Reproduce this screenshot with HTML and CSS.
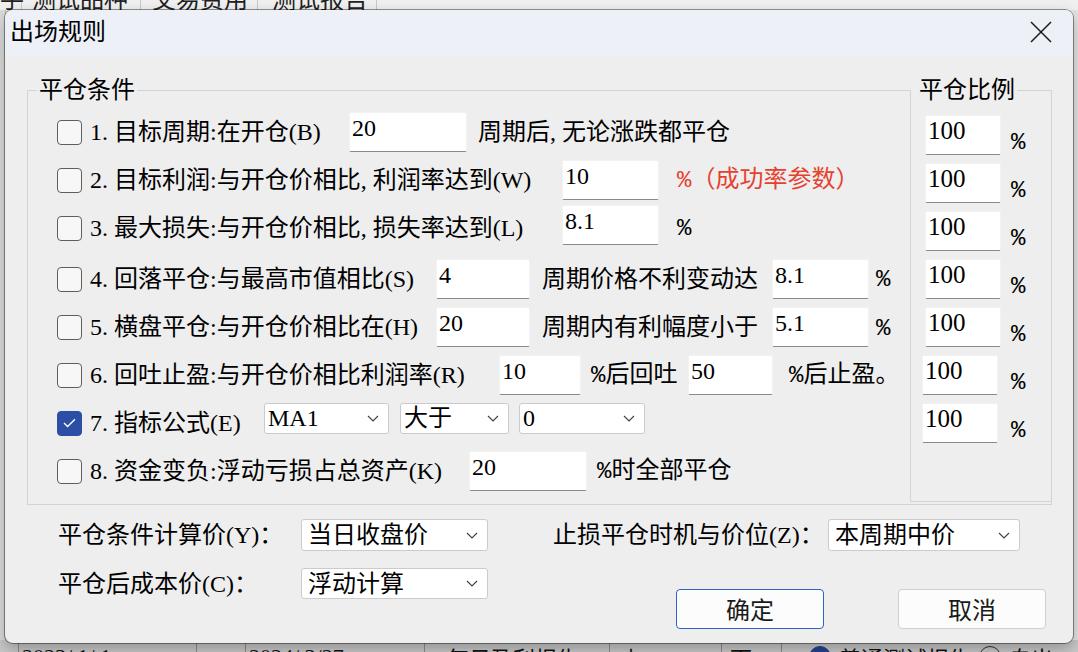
FILE: index.html
```html
<!DOCTYPE html>
<html lang="zh-CN">
<head>
<meta charset="utf-8">
<title>出场规则</title>
<link rel="stylesheet" href="styles.css">
</head>
<body>
<div class="app">
  <div class="app-tabs">
    <span class="app-tab app-tab--stub">手</span>
    <span class="app-tab app-tab--a">测试品种</span>
    <span class="app-tab app-tab--b">交易费用</span>
    <span class="app-tab app-tab--c">测试报告</span>
  </div>
  <div class="app-main">
    <div class="app-side"></div>
  </div>
  <div class="app-status">
    <span class="st st--a"></span>
    <span class="st st--b">2023/ 1/ 1</span>
    <span class="st st--c">→</span>
    <span class="st st--d">2024/ 3/27</span>
    <span class="st st--e">每日盈利报告</span>
    <span class="st st--f">山</span>
    <span class="st st--g">下</span>
    <span class="st st--h"><span class="radio radio--on"></span>普通测试报告<span class="radio"></span>自出</span>
  </div>

  <div class="dialog">
    <div class="titlebar">
      <span class="title">出场规则</span>
      <button class="close" type="button" aria-label="关闭">
        <svg width="22" height="22" viewBox="0 0 22 22"><path d="M1 1L21 21M21 1L1 21" stroke="#1b1b1b" stroke-width="1.5" fill="none"/></svg>
      </button>
    </div>

    <div class="dialog-body">
      <div class="groups">
        <fieldset class="group group--conditions">
          <legend>平仓条件</legend>

          <div class="row">
            <span class="box"></span>
            <span class="label label--b">1. 目标周期:在开仓(B)</span>
            <input class="num w118" type="text" value="20">
            <span class="text ml11">周期后, 无论涨跌都平仓</span>
          </div>

          <div class="row">
            <span class="box"></span>
            <span class="label label--w">2. 目标利润:与开仓价相比, 利润率达到(W)</span>
            <input class="num w97" type="text" value="10">
            <span class="text red ml18"><span class="pct">%</span>（成功率参数）</span>
          </div>

          <div class="row row--gap">
            <span class="box"></span>
            <span class="label label--l">3. 最大损失:与开仓价相比, 损失率达到(L)</span>
            <input class="num w97 num--up" type="text" value="8.1">
            <span class="text ml18"><span class="pct">%</span></span>
          </div>

          <div class="row">
            <span class="box"></span>
            <span class="label label--s">4. 回落平仓:与最高市值相比(S)</span>
            <input class="num w94" type="text" value="4">
            <span class="text mid">周期价格不利变动达</span>
            <input class="num w97" type="text" value="8.1">
            <span class="text ml7"><span class="pct">%</span></span>
          </div>

          <div class="row">
            <span class="box"></span>
            <span class="label label--s">5. 横盘平仓:与开仓价相比在(H)</span>
            <input class="num w94" type="text" value="20">
            <span class="text mid">周期内有利幅度小于</span>
            <input class="num w97" type="text" value="5.1">
            <span class="text ml7 low"><span class="pct">%</span></span>
          </div>

          <div class="row">
            <span class="box"></span>
            <span class="label label--r">6. 回吐止盈:与开仓价相比利润率(R)</span>
            <input class="num w82" type="text" value="10">
            <span class="text mid2"><span class="pct">%</span>后回吐</span>
            <input class="num w85" type="text" value="50">
            <span class="text ml16"><span class="pct">%</span>后止盈。</span>
          </div>

          <div class="row">
            <span class="box box--on">
              <svg width="13" height="10" viewBox="0 0 13 10"><path d="M1 5L4.6 8.5L12 1.2" stroke="#fff" stroke-width="1.4" fill="none"/></svg>
            </span>
            <span class="label label--e">7. 指标公式(E)</span>
            <div class="select select--row w125">MA1<svg width="12" height="7" viewBox="0 0 12 7"><path d="M1 1L6 6L11 1" stroke="#444" stroke-width="1.2" fill="none"/></svg></div>
            <div class="select select--row w109 ml11">大于<svg width="12" height="7" viewBox="0 0 12 7"><path d="M1 1L6 6L11 1" stroke="#444" stroke-width="1.2" fill="none"/></svg></div>
            <div class="select select--row w126 ml10">0<svg width="12" height="7" viewBox="0 0 12 7"><path d="M1 1L6 6L11 1" stroke="#444" stroke-width="1.2" fill="none"/></svg></div>
          </div>

          <div class="row">
            <span class="box"></span>
            <span class="label label--k">8. 资金变负:浮动亏损占总资产(K)</span>
            <input class="num w118" type="text" value="20">
            <span class="text ml10"><span class="pct">%</span>时全部平仓</span>
          </div>
        </fieldset>

        <fieldset class="group group--ratio">
          <legend>平仓比例</legend>
          <div class="ratio-row"><input class="num ratio" type="text" value="100"><span class="pct ratio-pct">%</span></div>
          <div class="ratio-row"><input class="num ratio" type="text" value="100"><span class="pct ratio-pct">%</span></div>
          <div class="ratio-row"><input class="num ratio" type="text" value="100"><span class="pct ratio-pct">%</span></div>
          <div class="ratio-row"><input class="num ratio" type="text" value="100"><span class="pct ratio-pct">%</span></div>
          <div class="ratio-row"><input class="num ratio" type="text" value="100"><span class="pct ratio-pct">%</span></div>
          <div class="ratio-row ratio-row--shift"><input class="num ratio" type="text" value="100"><span class="pct ratio-pct">%</span></div>
          <div class="ratio-row ratio-row--shift"><input class="num ratio" type="text" value="100"><span class="pct ratio-pct">%</span></div>
        </fieldset>
      </div>

      <div class="footer">
        <div class="footer-col">
          <div class="field">
            <span class="field-label w243">平仓条件计算价(Y)：</span>
            <div class="select w187">当日收盘价<svg width="12" height="7" viewBox="0 0 12 7"><path d="M1 1L6 6L11 1" stroke="#444" stroke-width="1.2" fill="none"/></svg></div>
          </div>
          <div class="field field--next">
            <span class="field-label w243">平仓后成本价(C)：</span>
            <div class="select select--short w187">浮动计算<svg width="12" height="7" viewBox="0 0 12 7"><path d="M1 1L6 6L11 1" stroke="#444" stroke-width="1.2" fill="none"/></svg></div>
          </div>
        </div>
        <div class="footer-col footer-col--right">
          <div class="field">
            <span class="field-label w275">止损平仓时机与价位(Z)：</span>
            <div class="select w192">本周期中价<svg width="12" height="7" viewBox="0 0 12 7"><path d="M1 1L6 6L11 1" stroke="#444" stroke-width="1.2" fill="none"/></svg></div>
          </div>
          <div class="buttons">
            <button class="btn btn--primary" type="button">确定</button>
            <button class="btn" type="button">取消</button>
          </div>
        </div>
      </div>
    </div>
  </div>
</div>
</body>
</html>
```

FILE: styles.css
```css
* { box-sizing: border-box; }

html, body { margin: 0; padding: 0; }

body {
  width: 1078px;
  height: 652px;
  overflow: hidden;
  font-family: "Liberation Serif", "Noto Sans CJK SC", serif;
  font-size: 24px;
  line-height: 24px;
  color: #000;
  background: #f0f0f0;
}

/* ---------- background application ---------- */
.app {
  position: relative;
  width: 1078px;
  height: 652px;
  display: grid;
  grid-template-rows: 10px 1fr 12px;
  background: #e4e4e4;
}

.app-tabs {
  display: flex;
  align-items: flex-end;
  overflow: hidden;
  background: #f0f0f0;
  font-family: "Noto Sans CJK SC", sans-serif;
  color: #222;
}

.app-tab {
  flex: none;
  height: 24px;
  line-height: 24px;
  padding-left: 11px;
  border-right: 1px solid #c8c8c8;
  white-space: nowrap;
}
.app-tab--stub { width: 22px; padding-left: 0; }
.app-tab--a { width: 119px; padding-left: 10px; }
.app-tab--b { width: 117px; padding-left: 11px; }
.app-tab--c { width: 119px; padding-left: 14px; }

.app-main { display: flex; }
.app-side { width: 6px; background: #dcdcdc; border-right: 1px solid #b8b8b8; }

.app-status {
  display: flex;
  overflow: hidden;
  background: #bdbdbd;
  font-family: "Noto Sans CJK SC", sans-serif;
  font-size: 22px;
  color: #111;
}
.st {
  flex: none;
  display: flex;
  align-items: flex-start;
  gap: 8px;
  padding: 5px 0 0 3px;
  border-right: 1px solid #8e8e8e;
  line-height: 24px;
  white-space: nowrap;
  background: #c9c9c9;
}
.st--a { width: 19px; }
.st--b { width: 178px; font-family: "Liberation Serif", serif; }
.st--c { width: 49px; padding-left: 22px; }
.st--d { width: 179px; font-family: "Liberation Serif", serif; }
.st--e { width: 185px; padding-left: 22px; }
.st--f { width: 112px; padding-left: 10px; }
.st--g { width: 60px; padding-left: 8px; }
.st--h { flex: 1; padding-left: 27px; border-right: 0; }
.radio {
  width: 22px;
  height: 22px;
  border-radius: 50%;
  border: 1.5px solid #333;
  margin-top: 1px;
  flex: none;
}
.radio--on { background: #25428f; border-color: #25428f; }

/* ---------- dialog ---------- */
.dialog {
  position: absolute;
  left: 5px;
  top: 10px;
  width: 1068px;
  height: 633px;
  background: #eeeeee;
  border-radius: 8px;
  overflow: hidden;
  box-shadow: 0 0 0 1px rgba(0, 0, 0, 0.4), 0 6px 16px rgba(0, 0, 0, 0.28);
  display: flex;
  flex-direction: column;
}

.titlebar {
  flex: none;
  height: 47px;
  display: flex;
  align-items: center;
  justify-content: space-between;
  padding: 0 21px 0 5px;
  background: #eef0f8;
  font-family: "Noto Sans CJK SC", sans-serif;
}
.title { font-size: 24px; line-height: 24px; margin-bottom: 8px; }
.close {
  display: flex;
  width: 22px;
  height: 22px;
  padding: 0;
  margin-bottom: 4px;
  border: 0;
  background: none;
}

.dialog-body { padding: 21px 21px 0 22px; }

.groups { display: grid; }
.groups > .group { grid-area: 1 / 1; }

.group {
  margin: 0;
  min-width: 0;
  border: 1px solid #d3d3d3;
}
.group legend {
  padding: 0 2px;
  line-height: 24px;
  font-size: 24px;
}

.group--conditions { padding: 6px 0 9px 9px; }

.group--ratio {
  justify-self: end;
  width: 142px;
  margin-bottom: 3px;
  padding: 13px 0 0 0;
}
.group--ratio legend {
  padding: 0 2px 0 8px;
  background: #eeeeee;
}

.row {
  display: flex;
  align-items: center;
  height: 48px;
  margin-left: 20px;
}
.row--gap { margin-bottom: 3px; }

.box {
  flex: none;
  width: 25px;
  height: 25px;
  margin-right: 8px;
  border: 1.5px solid #5e5e5e;
  border-radius: 4px;
  background: #f7f7f7;
}
.box--on {
  display: flex;
  align-items: center;
  justify-content: center;
  background: #2c4fa5;
  border-color: #2c4fa5;
}

.label { flex: none; white-space: nowrap; }
.label--b { width: 259px; }
.label--w, .label--l { width: 472px; }
.label--s { width: 346px; }
.label--r { width: 409px; }
.label--e { width: 174px; }
.label--k { width: 379px; }

.text { flex: none; white-space: nowrap; }
.red { color: #e5412f; }
.pct { font-family: "Liberation Mono", monospace; }
.mid { width: 242px; padding-left: 12px; }
.mid2 { width: 107px; padding-left: 10px; }
.low { align-self: flex-end; margin-bottom: 10px; }

.ml7 { margin-left: 7px; }
.ml10 { margin-left: 10px; }
.ml11 { margin-left: 11px; }
.ml16 { margin-left: 16px; }
.ml18 { margin-left: 18px; }

.num {
  flex: none;
  height: 40px;
  margin: 0;
  padding: 3px 2px 11px;
  border: 1px solid #f2f2f2;
  border-bottom-color: #8a8a8a;
  border-radius: 2px;
  background: #fff;
  font: inherit;
  line-height: 24px;
  color: #000;
  outline: none;
}
.num--up { margin-bottom: 6px; }

.w82 { width: 82px; }
.w85 { width: 85px; }
.w94 { width: 94px; }
.w97 { width: 97px; }
.w109 { width: 109px; }
.w118 { width: 118px; }
.w125 { width: 125px; }
.w126 { width: 126px; }
.w187 { width: 187px; }
.w192 { width: 192px; }
.w243 { width: 243px; }
.w275 { width: 275px; }

.select {
  flex: none;
  display: flex;
  align-items: center;
  justify-content: space-between;
  height: 32px;
  padding: 0 9px 0 6px;
  border: 1px solid #cbcbcb;
  border-radius: 3px;
  background: #fff;
  white-space: nowrap;
}
.select--row { height: 31px; margin-bottom: 10px; padding-left: 3px; }
.select--short { height: 31px; }

/* ratio column */
.ratio-row {
  display: flex;
  align-items: flex-start;
  height: 48px;
  padding-left: 14px;
}
.ratio-row--shift { padding-left: 11px; }
.ratio { width: 76px; font-size: 25px; }
.ratio-pct {
  align-self: flex-start;
  margin-top: 16px;
  margin-left: 10px;
  line-height: 24px;
}
.ratio-row--shift .ratio-pct { margin-left: 13px; }

/* footer */
.footer {
  display: flex;
  margin-top: 14px;
  padding-left: 31px;
}
.footer-col { flex: none; }
.footer-col--right { margin-left: 65px; }

.field {
  display: flex;
  align-items: center;
  height: 32px;
}
.field--next { margin-top: 17px; height: 31px; }
.field-label { flex: none; white-space: nowrap; }

.buttons {
  display: flex;
  gap: 74px;
  margin-top: 38px;
  padding-left: 123px;
}
.btn {
  width: 148px;
  height: 40px;
  padding: 0;
  border: 1px solid #cfcfcf;
  border-radius: 4px;
  background: #fcfcfc;
  font-family: "Noto Sans CJK SC", sans-serif;
  font-size: 24px;
  line-height: 24px;
  color: #1a1a1a;
}
.btn--primary { border-color: #2f63c9; }
```
